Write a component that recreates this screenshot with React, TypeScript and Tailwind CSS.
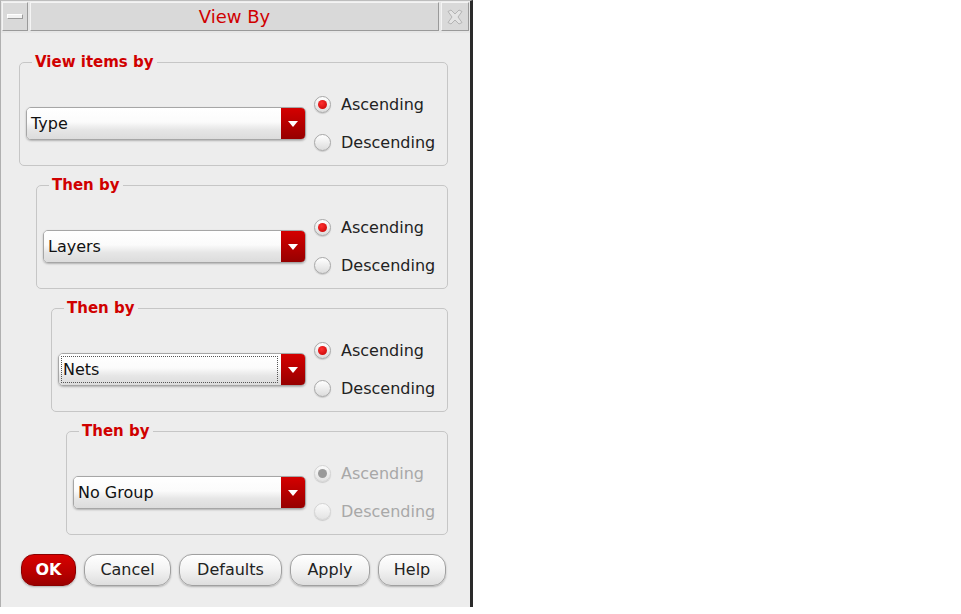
import React from "react";

const FONT = { fontFamily: '"DejaVu Sans", "Liberation Sans", sans-serif' };

function Radio({ label, checked, disabled }: { label: string; checked?: boolean; disabled?: boolean }) {
  return (
    <div className="flex items-center h-[19px]">
      <div
        className={
          "relative w-[17px] h-[17px] rounded-full border flex items-center justify-center shadow-[0_1px_1px_rgba(0,0,0,0.15)] " +
          (disabled
            ? "border-[#d4d4d4] bg-[linear-gradient(#fafafa,#e4e4e4)]"
            : "border-[#a8a8a8] bg-[linear-gradient(#ffffff,#dcdcdc)]")
        }
      >
        {checked && (
          <div
            className={
              "w-[9px] h-[9px] rounded-full " +
              (disabled ? "bg-[#9a9a9a]" : "bg-[radial-gradient(circle_at_40%_35%,#ff3030,#c00000)]")
            }
          />
        )}
      </div>
      <span className={"ml-[10px] text-[16px] leading-none " + (disabled ? "text-[#a8a8a8]" : "text-[#222]")}>
        {label}
      </span>
    </div>
  );
}

function Combo({ value, focus }: { value: string; focus?: boolean }) {
  return (
    <div className="flex-1 h-[33px] flex rounded-[5px] border border-[#a6a6a6] shadow-[0_1px_2px_rgba(0,0,0,0.25)] overflow-hidden">
      <div className="flex-1 relative flex items-center pl-[4px] bg-[linear-gradient(#ffffff_0%,#fbfbfb_45%,#e6e6e6_70%,#dcdcdc_100%)]">
        {focus && (
          <div className="absolute left-[2px] right-[3px] top-[2px] bottom-[2px] border border-dotted border-[#555]" />
        )}
        <span className="text-[16px] text-[#111] leading-none">{value}</span>
      </div>
      <div className="w-[24px] flex items-center justify-center bg-[linear-gradient(#d40000,#b00000_60%,#960000)]">
        <svg width="10" height="6" viewBox="0 0 10 6">
          <path d="M0 0 H10 L5 6 Z" fill="#fff" />
        </svg>
      </div>
    </div>
  );
}

function Group({ title, value, ml, focus, disabled }: { title: string; value: string; ml: string; focus?: boolean; disabled?: boolean }) {
  return (
    <div className={"relative h-[104px] border border-[#c6c6c6] rounded-[5px] mr-[22px] " + ml}>
      <span className="absolute -top-[10px] left-[12px] px-[3px] bg-[#ededed] text-[15px] font-bold text-[#d00000] leading-[18px]">
        {title}
      </span>
      <div className="h-full flex items-center pt-[19px] pl-[6px]">
        <Combo value={value} focus={focus} />
        <div className="w-[133px] ml-[8px] flex flex-col gap-[19px]">
          <Radio label="Ascending" checked disabled={disabled} />
          <Radio label="Descending" disabled={disabled} />
        </div>
      </div>
    </div>
  );
}

function Btn({ label, w, primary }: { label: string; w: string; primary?: boolean }) {
  return (
    <div
      className={
        "h-[32px] rounded-[13px] flex items-center justify-center text-[16px] leading-none shadow-[0_1px_2px_rgba(0,0,0,0.25)] " +
        w +
        (primary
          ? " border border-[#8a0000] bg-[linear-gradient(#d80000,#b80000_60%,#9a0000)] text-white font-bold"
          : " border border-[#a0a0a0] bg-[linear-gradient(#ffffff,#f4f4f4_45%,#dedede)] text-[#222]")
      }
    >
      {label}
    </div>
  );
}

export default function App() {
  return (
    <div className="w-[961px] h-[614px] bg-white flex items-start" style={FONT}>
      <div className="w-[473px] h-[607px] flex flex-col bg-[#ededed] border-l border-[#b0b0b0] border-r-[3px] border-r-[#2a2a2a] border-t border-t-[#bdbdbd]">
        {/* title bar */}
        <div className="h-[31px] flex mt-[1px] px-[1px] gap-[2px] bg-[#e6e6e6]">
          <div className="w-[26px] h-[29px] bg-[#d9d9d9] border-t border-l border-[#f4f4f4] border-r border-b border-r-[#9a9a9a] border-b-[#9a9a9a] flex items-center justify-center">
            <div className="w-[16px] h-[5px] bg-[#f2f2f2] border border-[#9c9c9c] border-t-white border-l-white" />
          </div>
          <div className="flex-1 h-[29px] bg-[#d9d9d9] border-t border-l border-[#f4f4f4] border-r border-b border-r-[#9a9a9a] border-b-[#9a9a9a] flex items-center justify-center">
            <span className="text-[18px] text-[#d00000] leading-none">View By</span>
          </div>
          <div className="w-[28px] h-[29px] bg-[#d9d9d9] border-t border-l border-[#f4f4f4] border-r border-b border-r-[#9a9a9a] border-b-[#9a9a9a] flex items-center justify-center">
            <svg width="18" height="16" viewBox="0 0 18 16">
              <path
                d="M2 2.5 L5 1 L9 5 L13 1 L16 2.5 L12 8 L16 13.5 L13 15 L9 11 L5 15 L2 13.5 L6 8 Z"
                fill="#e4e4e4"
                stroke="#b4b4b4"
                strokeWidth="1"
              />
            </svg>
          </div>
        </div>

        {/* body */}
        <div className="flex flex-col pt-[29px] gap-[19px]">
          <Group title="View items by" value="Type" ml="ml-[18px]" />
          <Group title="Then by" value="Layers" ml="ml-[35px]" />
          <Group title="Then by" value="Nets" ml="ml-[50px]" focus />
          <Group title="Then by" value="No Group" ml="ml-[65px]" disabled />
        </div>

        <div className="flex mt-[19px] ml-[20px] gap-[8px]">
          <Btn label="OK" w="w-[55px]" primary />
          <Btn label="Cancel" w="w-[87px]" />
          <Btn label="Defaults" w="w-[103px]" />
          <Btn label="Apply" w="w-[80px]" />
          <Btn label="Help" w="w-[68px]" />
        </div>
      </div>
    </div>
  );
}
